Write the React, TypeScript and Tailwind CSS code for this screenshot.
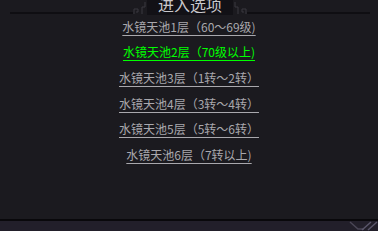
const items = [
  { label: '水镜天池1层（60～69级)', active: false },
  { label: '水镜天池2层（70级以上)', active: true },
  { label: '水镜天池3层（1转～2转）', active: false },
  { label: '水镜天池4层（3转～4转）', active: false },
  { label: '水镜天池5层（5转～6转）', active: false },
  { label: '水镜天池6层（7转以上)', active: false },
];

const font = { fontFamily: '"SimSun", "Noto Sans CJK SC", "DejaVu Sans", sans-serif' };

function Fret({ flip }: { flip?: boolean }) {
  return (
    <svg width="14" height="14" viewBox="0 0 14 14" className={flip ? '-scale-x-100' : ''}>
      <path d="M1 13V8h4v3H3M9 13V6h3V1" stroke="#3a3840" strokeWidth="1" fill="none" />
    </svg>
  );
}

export default function App() {
  return (
    <div className="w-[378px] h-[231px] bg-[#1b1a1f] flex flex-col overflow-hidden" style={font}>
      {/* title bar */}
      <div className="h-[15px] flex items-end">
        <div className="flex-1 flex items-end pl-[10px]">
          <div className="flex-1 h-[2px] mb-[1px] bg-[#0f0e12]" />
          <Fret />
        </div>
        <div className="w-[86px] h-[15px] bg-[#121116] flex justify-center overflow-hidden">
          <span className="text-[16px] leading-none -mt-[4px] text-[#c9c8cc]">进入选项</span>
        </div>
        <div className="flex-1 flex items-end pr-[8px]">
          <Fret flip />
          <div className="flex-1 h-[2px] mb-[1px] bg-[#0f0e12]" />
        </div>
      </div>

      {/* options */}
      <div className="flex flex-col items-center -mt-[1px]">
        {items.map((it) => (
          <div key={it.label} className="h-[25.6px] flex items-center">
            <span
              className={`text-[12px] leading-none underline underline-offset-[3px] decoration-1 whitespace-pre ${
                it.active ? 'text-[#00ff00]' : 'text-[#a9a8ad]'
              }`}
            >
              {it.label}
            </span>
          </div>
        ))}
      </div>

      <div className="flex-1" />

      {/* bottom strip */}
      <div className="h-[2px] bg-[#09080b]" />
      <div className="h-[10px] bg-[#221f2a] flex justify-end items-end">
        <svg width="30" height="10" viewBox="0 0 30 10">
          <path d="M2 1l8 7h6" stroke="#4a4656" strokeWidth="1.5" fill="none" />
          <path d="M14 9l9-8M20 9l9-8" stroke="#5a566a" strokeWidth="1.5" fill="none" />
        </svg>
      </div>
    </div>
  );
}
